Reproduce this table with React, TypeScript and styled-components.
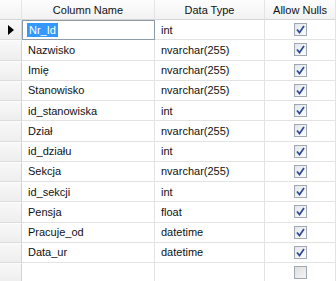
import { Fragment } from 'react';
import styled, { createGlobalStyle } from 'styled-components';

type Col = { name: string; type: string; nulls: boolean };

const rows: Col[] = [
  { name: 'Nr_Id', type: 'int', nulls: true },
  { name: 'Nazwisko', type: 'nvarchar(255)', nulls: true },
  { name: 'Imię', type: 'nvarchar(255)', nulls: true },
  { name: 'Stanowisko', type: 'nvarchar(255)', nulls: true },
  { name: 'id_stanowiska', type: 'int', nulls: true },
  { name: 'Dział', type: 'nvarchar(255)', nulls: true },
  { name: 'id_działu', type: 'int', nulls: true },
  { name: 'Sekcja', type: 'nvarchar(255)', nulls: true },
  { name: 'id_sekcji', type: 'int', nulls: true },
  { name: 'Pensja', type: 'float', nulls: true },
  { name: 'Pracuje_od', type: 'datetime', nulls: true },
  { name: 'Data_ur', type: 'datetime', nulls: true },
  { name: '', type: '', nulls: false },
];

const GlobalStyle = createGlobalStyle`
  html, body {
    margin: 0;
    padding: 0;
    background: #ffffff;
  }
  body {
    font-family: 'Liberation Sans', Arial, sans-serif;
    font-size: 11px;
    color: #111;
  }
`;

const Grid = styled.div`
  display: grid;
  grid-template-columns: 22px 133px 110px 1fr;
  grid-template-rows: 20px;
  grid-auto-rows: 20.25px;
  width: 336px;
  height: 281px;
  overflow: hidden;
  background: #fff;
`;

const HeadCell = styled.div`
  display: flex;
  align-items: center;
  justify-content: center;
  box-sizing: border-box;
  background: linear-gradient(#fdfdfd, #f2f2f2);
  border-bottom: 1px solid #d5d5d5;
  border-right: 1px solid #e4e4e4;
  white-space: nowrap;
`;

const Selector = styled.div`
  display: flex;
  align-items: center;
  justify-content: center;
  box-sizing: border-box;
  background: linear-gradient(#f8f8f8, #eeeeee);
  border-top: 1px solid #fcfcfc;
  border-bottom: 1px solid #dcdcdc;
  border-right: 1px solid #d2d2d2;
`;

const Arrow = styled.div`
  width: 0;
  height: 0;
  border-top: 5px solid transparent;
  border-bottom: 5px solid transparent;
  border-left: 6px solid #000;
  margin-left: 1px;
`;

const Cell = styled.div<{ $active?: boolean; $center?: boolean }>`
  display: flex;
  align-items: center;
  justify-content: ${({ $center }) => ($center ? 'center' : 'flex-start')};
  box-sizing: border-box;
  padding-left: ${({ $center }) => ($center ? '0' : '6px')};
  border-bottom: 1px solid #e3e3e3;
  border-right: 1px solid #e3e3e3;
  white-space: nowrap;
  ${({ $active }) =>
    $active &&
    `
    border: 1px solid #8e9aa6;
    padding-left: 4px;
  `}
`;

const Selected = styled.span`
  background: #3399ff;
  color: #fff;
  padding: 1px 2px;
`;

const Box = styled.div<{ $checked: boolean }>`
  width: 13px;
  height: 13px;
  box-sizing: border-box;
  border: 1px solid #a0a8b4;
  background: ${({ $checked }) =>
    $checked
      ? 'linear-gradient(135deg, #e2e6ec, #fdfdfd)'
      : 'linear-gradient(135deg, #dedede, #f4f4f4)'};
  display: flex;
  align-items: center;
  justify-content: center;
`;

const Check = ({ checked }: { checked: boolean }) => (
  <Box $checked={checked}>
    {checked && (
      <svg width="9" height="9" viewBox="0 0 9 9">
        <path d="M1 4.5 L3.5 7.5 L8 1" fill="none" stroke="#2d4a8e" strokeWidth="1.7" />
      </svg>
    )}
  </Box>
);

const App = () => {
  return (
    <>
      <GlobalStyle />
      <Grid>
        <HeadCell />
        <HeadCell>Column Name</HeadCell>
        <HeadCell>Data Type</HeadCell>
        <HeadCell>Allow Nulls</HeadCell>
        {rows.map((r, i) => (
          <Fragment key={i}>
            <Selector>{i === 0 && <Arrow />}</Selector>
            <Cell $active={i === 0}>
              {i === 0 ? <Selected>{r.name}</Selected> : r.name}
            </Cell>
            <Cell>{r.type}</Cell>
            <Cell $center>
              <Check checked={r.nulls} />
            </Cell>
          </Fragment>
        ))}
      </Grid>
    </>
  );
};

export default App;
